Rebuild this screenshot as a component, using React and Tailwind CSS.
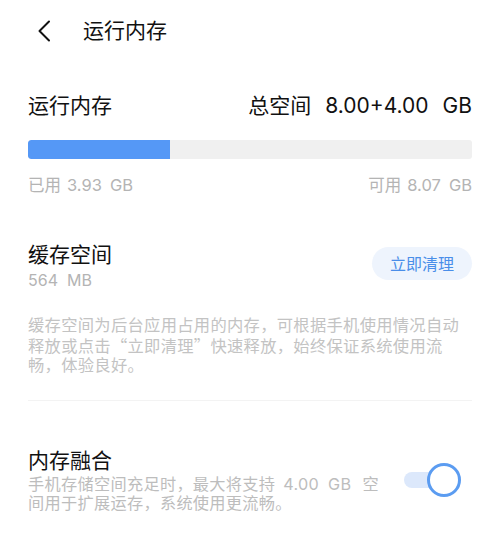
import { useState } from 'react';

const cjk = { fontFamily: '"Noto Sans CJK SC", sans-serif' };

function Toggle({ on, onChange }) {
  return (
    <button onClick={() => onChange(!on)} className="relative w-[57px] h-[34px] shrink-0 mr-[11px]">
      <span className="absolute left-0 top-[9px] w-[38px] h-[16px] rounded-full bg-[#dce8fb]"></span>
      <span className="absolute right-0 top-0 w-[34px] h-[34px] rounded-full bg-white border-[3px] border-[#5b9cf1]"></span>
    </button>
  );
}

function Amount({ label, value, unit }) {
  return (
    <span className="flex items-baseline">
      <span>{label}</span>
      <span className="ml-[6px]">{value}</span>
      <span className="ml-[8px]">{unit}</span>
    </span>
  );
}

export default function App() {
  const [merge, setMerge] = useState(true);
  const usedPct = 32;

  return (
    <div
      className="w-[500px] h-[537px] bg-white overflow-hidden text-[#111]"
      style={{ fontFamily: 'Inter, "Noto Sans CJK SC", sans-serif' }}
    >
      <header className="h-[62px] flex items-center">
        <svg className="ml-[36px]" width="16" height="22" viewBox="0 0 16 22" fill="none">
          <path d="M13 1.5 L3.5 11 L13 20.5" stroke="#111" strokeWidth="2" strokeLinecap="round" strokeLinejoin="round" />
        </svg>
        <h1 className="ml-[31px] text-[21px] leading-[28px]">运行内存</h1>
      </header>

      <main className="px-[28px]">
        <div className="mt-[30px] h-[28px] flex items-center justify-between text-[21px]">
          <span>运行内存</span>
          <span className="flex items-baseline">
            <span>总空间</span>
            <span className="ml-[14px]">8.00+4.00</span>
            <span className="ml-[14px]">GB</span>
          </span>
        </div>

        <div className="mt-[20px] h-[19px] bg-[#f0f0f0] rounded-[3px] overflow-hidden">
          <div className="h-full bg-[#5598f6] rounded-l-[3px]" style={{ width: `${usedPct}%` }}></div>
        </div>

        <div className="mt-[15px] h-[22px] flex items-center justify-between text-[16.5px] text-[#b4b4b4]">
          <Amount label="已用" value="3.93" unit="GB" />
          <Amount label="可用" value="8.07" unit="GB" />
        </div>

        <div className="mt-[45px] flex items-start justify-between">
          <div>
            <div className="h-[28px] leading-[28px] text-[21px]">缓存空间</div>
            <div className="h-[22px] leading-[22px] text-[16px] text-[#b4b4b4] flex items-baseline">
              <span>564</span>
              <span className="ml-[9px]">MB</span>
            </div>
          </div>
          <button className="mt-[6px] h-[33px] w-[100px] rounded-full bg-[#eef4fd] text-[16px] text-[#4a8ee9]">立即清理</button>
        </div>

        <p className="mt-[25px] text-[16.3px] leading-[19.5px] text-[#c3c3c3] tracking-[0.3px]">
          缓存空间为后台应用占用的内存，可根据手机使用情况自动
          <br />
          释放或点击<span style={cjk}>“</span>立即清理<span style={cjk}>”</span>快速释放，始终保证系统使用流
          <br />
          畅，体验良好。
        </p>

        <div className="mt-[24px] h-px bg-[#f3f3f3]"></div>

        <div className="mt-[46px] flex items-center justify-between">
          <div>
            <div className="h-[28px] leading-[28px] text-[21px]">内存融合</div>
            <p className="text-[16.2px] leading-[19px] text-[#bdbdbd] tracking-[0.3px]">
              手机存储空间充足时，最大将支持<span className="ml-[8px]">4.00</span>
              <span className="ml-[9px]">GB</span>
              <span className="ml-[11px]">空</span>
              <br />
              间用于扩展运存，系统使用更流畅。
            </p>
          </div>
          <Toggle on={merge} onChange={setMerge} />
        </div>
      </main>
    </div>
  );
}
